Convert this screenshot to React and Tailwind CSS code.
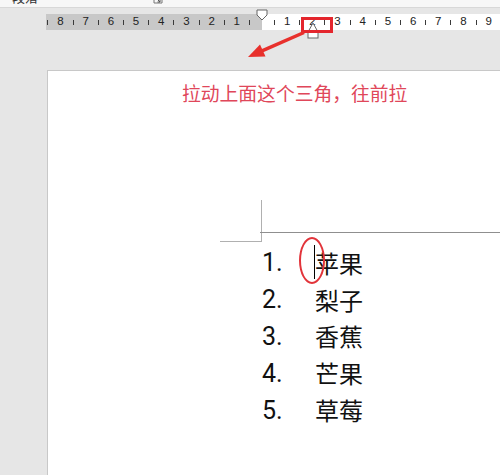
import React from 'react'

const CJK = { fontFamily: '"Noto Sans CJK SC", "Noto Sans", sans-serif' }

function Tick() {
  return (
    <div className="w-[12.6px] shrink-0 flex items-center justify-center">
      <span className="w-px h-[5px] bg-[#3a3a3a]" />
    </div>
  )
}

function Num({ n }) {
  return (
    <div className="w-[12.6px] shrink-0 flex items-center justify-center text-[11.5px] leading-none text-[#222] font-['Liberation_Sans',Arial,sans-serif]">
      {n}
    </div>
  )
}

function Ruler() {
  const left = [8, 7, 6, 5, 4, 3, 2, 1]
  const right = [1, 2, 3, 4, 5, 6, 7, 8, 9]
  return (
    <div className="mt-[6px] h-[16px] flex pl-[46px]">
      {/* margin part of the ruler */}
      <div className="w-[216px] bg-[#c8c8c8] flex justify-end pr-[6.3px] overflow-hidden">
        {left.map(n => (
          <React.Fragment key={n}>
            <Tick />
            <Num n={n} />
          </React.Fragment>
        ))}
        <Tick />
      </div>
      {/* text area part */}
      <div className="flex-1 bg-white flex pl-[6.3px] overflow-hidden">
        {right.map(n => (
          <React.Fragment key={n}>
            <Tick />
            <Num n={n} />
          </React.Fragment>
        ))}
        <Tick />
      </div>
    </div>
  )
}

const items = ['苹果', '梨子', '香蕉', '芒果', '草莓']

function ListRow({ i, label }) {
  return (
    <div className="h-[36.8px] flex items-center">
      <div className="w-[53px] shrink-0 text-[25px] leading-none text-[#111] font-['Roboto','Liberation_Sans',sans-serif]">
        {i + 1}.
      </div>
      <div className="relative text-[24px] leading-none text-[#111]" style={CJK}>
        {i === 0 && (
          <>
            <span className="absolute left-[-1px] top-[-6px] h-[34px] w-px bg-black" />
            <span className="absolute left-[-16px] top-[-14px] w-[26px] h-[47px] rounded-[50%] border-2 border-[#e2343a]" />
          </>
        )}
        {label}
      </div>
    </div>
  )
}

export default function App() {
  return (
    <div className="relative w-[500px] h-[475px] overflow-hidden bg-[#e6e6e6] flex flex-col">
      {/* ribbon bottom edge */}
      <div className="h-[8px] shrink-0 bg-[#f7f7f7] border-b border-[#d8d8d8] overflow-hidden relative">
        <div className="-mt-[11px] pl-[12px] text-[13px] leading-[15px] text-[#333]" style={CJK}>段落</div>
        <svg className="absolute left-[153px] top-[-6px]" width="10" height="11" viewBox="0 0 10 11">
          <path d="M1 1h8v8H1z" fill="none" stroke="#777" strokeWidth="1" />
          <path d="M4 5l3 3M7 5.5V8H4.5" fill="none" stroke="#555" strokeWidth="1" />
        </svg>
      </div>

      <Ruler />

      {/* page */}
      <div className="mt-[40px] ml-[47px] flex-1 bg-white border-l border-t border-[#c8c8c8] flex flex-col">
        <div className="pt-[12px] pl-[134px] text-[18.8px] leading-[20px] text-[#e0475a]" style={CJK}>
          拉动上面这个三角，往前拉
        </div>

        {/* margin corner + header line */}
        <div className="mt-[97px] flex">
          <div className="ml-[172px] w-[42px] h-[42px] border-r border-b border-[#b0b0b0]" />
          <div className="flex-1 h-[33px] -ml-[2px] border-b border-[#8f8f8f]" />
        </div>

        <div className="mt-[2.5px] ml-[214px] flex flex-col">
          {items.map((label, i) => (
            <ListRow key={label} i={i} label={label} />
          ))}
        </div>
      </div>

      {/* indent markers, highlight box and arrow drawn over the ruler */}
      <svg className="absolute left-0 top-0 pointer-events-none" width="500" height="70" viewBox="0 0 500 70">
        <polygon points="257,10 267,10 267,15 262,20 257,15" fill="#fff" stroke="#666" strokeWidth="1" />
        <polygon points="308,32 313,23 318,32" fill="#fff" stroke="#666" strokeWidth="1" />
        <rect x="308" y="32" width="10" height="6" fill="#fff" stroke="#666" strokeWidth="1" />
        <rect x="302.5" y="18.5" width="29" height="13" fill="none" stroke="#e4262d" strokeWidth="3" />
        <line x1="304" y1="32.5" x2="262" y2="50.8" stroke="#e8302c" strokeWidth="3.5" />
        <polygon points="248,57 260,44.6 265.5,56.6" fill="#e8302c" />
      </svg>
    </div>
  )
}
